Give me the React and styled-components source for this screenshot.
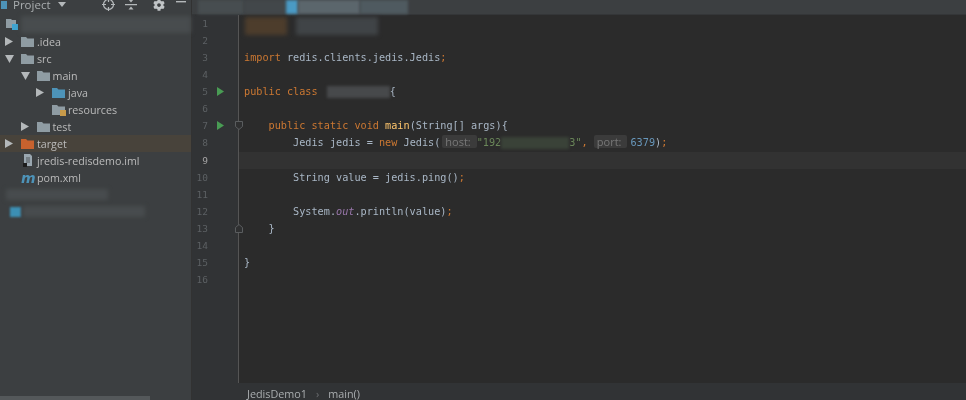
import React from 'react'
import styled, { createGlobalStyle } from 'styled-components'
import { FaCog } from 'react-icons/fa'

const GlobalStyle = createGlobalStyle`
  html, body {
    margin: 0;
    padding: 0;
    background: #2b2b2b;
  }
`

const TREE = [
  { depth: 0, arrow: 'right', icon: 'folder', name: '.idea' },
  { depth: 0, arrow: 'down', icon: 'folder', name: 'src' },
  { depth: 1, arrow: 'down', icon: 'folder', name: 'main' },
  { depth: 2, arrow: 'right', icon: 'source', name: 'java' },
  { depth: 2, icon: 'resources', name: 'resources' },
  { depth: 1, arrow: 'right', icon: 'folder', name: 'test' },
  { depth: 0, arrow: 'right', icon: 'target', name: 'target', selected: true },
  { depth: 0, icon: 'iml', name: 'jredis-redisdemo.iml' },
  { depth: 0, icon: 'maven', name: 'pom.xml' },
]

const RUN_LINES = [5, 7]
const LINE_COUNT = 16

const FolderIcon = ({ color = '#8f9ca3' }) => (
  <svg width="13" height="11" viewBox="0 0 13 11">
    <path d="M0 1h5l1.5 1.5H13V11H0z" fill={color} />
  </svg>
)

const FileIcon = () => (
  <svg width="13" height="13" viewBox="0 0 13 13">
    <path d="M3 0h6l2 2v10H3z" fill="#9aa7b0" />
    <path d="M5 4h4M5 6h4M5 8h4" stroke="#50565a" strokeWidth="1" />
    <rect x="2" y="9" width="4" height="4" fill="#1d1d1d" />
  </svg>
)

const TreeIcon = ({ type }) => {
  if (type === 'source') return <FolderIcon color="#4d93b8" />
  if (type === 'target') return <FolderIcon color="#c8622e" />
  if (type === 'iml') return <FileIcon />
  if (type === 'maven') return <MavenMark>m</MavenMark>
  if (type === 'resources') {
    return (
      <IconStack>
        <FolderIcon />
        <svg width="6" height="6" viewBox="0 0 6 6">
          <path d="M0 0h6v6H0z" fill="#c79a4a" />
        </svg>
      </IconStack>
    )
  }
  return <FolderIcon />
}

const Arrow = ({ dir }) => (
  <ArrowBox>
    {dir === 'right' && (
      <svg width="8" height="9" viewBox="0 0 8 9"><path d="M0 0l8 4.5L0 9z" fill="#b4b8ba" /></svg>
    )}
    {dir === 'down' && (
      <svg width="9" height="8" viewBox="0 0 9 8"><path d="M0 0h9L4.5 8z" fill="#b4b8ba" /></svg>
    )}
  </ArrowBox>
)

const RunIcon = () => (
  <svg width="7" height="9" viewBox="0 0 7 9"><path d="M0 0l7 4.500L0 9z" fill="#499c54" /></svg>
)

const FoldIcon = ({ line, up }) => (
  <FoldMark $line={line} $up={up}>
    <svg width="8" height="9" viewBox="0 0 8 9">
      <path d="M.5.5h7v5L4 8.500.5 5.500z" fill="#2f3031" stroke="#5a5d5f" />
    </svg>
  </FoldMark>
)

const App = () => {
  return (
    <Page>
      <GlobalStyle />

      <Sidebar>
        <PanelHeader>
          <HeaderTitle>
            <svg width="9" height="8" viewBox="0 0 9 8"><path d="M0 0h6v8H0z" fill="#4d93b8" /></svg>
            Project
            <svg width="8" height="5" viewBox="0 0 8 5"><path d="M0 0h8L4 5z" fill="#b4b8ba" /></svg>
          </HeaderTitle>
          <HeaderIcons>
            <svg width="13" height="13" viewBox="0 0 13 13" fill="none" stroke="#b4b8ba" strokeWidth="1.2">
              <circle cx="6.500" cy="6.500" r="5" />
              <path d="M6.500 0v4M6.500 9v4M0 6.500h4M9 6.500h4" />
            </svg>
            <svg width="12" height="13" viewBox="0 0 12 13" fill="#b4b8ba">
              <path d="M0 6h12v1.200H0zM6 4.500L3.500 1.500h5zM6 8.500l2.500 3h-5z" />
            </svg>
            <GearSlot><FaCog size={12} color="#c0c4c6" /></GearSlot>
            <svg width="10" height="13" viewBox="0 0 10 13"><path d="M0 3h10v1.400H0z" fill="#b4b8ba" /></svg>
          </HeaderIcons>
        </PanelHeader>

        <Tree>
          <RootRow>
            <svg width="13" height="13" viewBox="0 0 13 13">
              <path d="M0 1h5l1 1h4v8H0z" fill="#8f9ca3" />
              <rect x="6" y="6" width="6" height="6" fill="#3fa3cf" />
            </svg>
            <Smudge $width={170} $height={17} />
          </RootRow>
          {TREE.map(row => (
            <TreeRow key={row.name} $depth={row.depth} $selected={row.selected}>
              <Arrow dir={row.arrow} />
              <IconSlot><TreeIcon type={row.icon} /></IconSlot>
              <TreeLabel>{row.name}</TreeLabel>
            </TreeRow>
          ))}
          <RootRow>
            <Smudge $width={102} $height={11} />
          </RootRow>
          <RootRow>
            <BlueBlock />
            <Smudge $width={122} $height={11} />
          </RootRow>
        </Tree>

        <TreeScrollbar />
      </Sidebar>

      <Main>
        <TabBar>
          <TabSmudge $color="#474d50" $width={46} />
          <TabSmudge $color="#42474a" $width={42} />
          <TabSmudge $color="#4a9ac4" $width={12} />
          <TabSmudge $color="#5b666c" $width={62} />
          <TabSmudge $color="#4f5a60" $width={48} />
        </TabBar>

        <Editor>
          <Gutter>
            {Array.from({ length: LINE_COUNT }, (_, i) => i + 1).map(n => (
              <GutterRow key={n}>
                <LineNumber $current={n === 9}>{n}</LineNumber>
                <RunSlot>{RUN_LINES.includes(n) && <RunIcon />}</RunSlot>
              </GutterRow>
            ))}
          </Gutter>

          <Code>
            <HeaderMosaic>
              <MosaicBlock $color="#4d3d2c" $width={42} />
              <MosaicBlock $color="transparent" $width={9} />
              <MosaicBlock $color="#404447" $width={82} />
            </HeaderMosaic>
            <FoldIcon line={7} />
            <FoldIcon line={13} up />

            <Line />
            <Line />
            <Line><Kw>import</Kw> redis.clients.jedis.Jedis<Kw>;</Kw></Line>
            <Line />
            <Line><Kw>public class</Kw> <NameSmudge $width={63} $offset={3} />{'{'}</Line>
            <Line />
            <Line>    <Kw>public static void</Kw> <Method>main</Method>(String[] args){'{'}</Line>
            <Line>
              {'        '}Jedis jedis = <Kw>new</Kw> Jedis(<Hint $before={2}>host:</Hint><Str>"192</Str><NameSmudge $width={68} $color="#3a4238" /><Str>3"</Str><Kw>,</Kw> <Hint>port:</Hint><Num>6379</Num>)<Kw>;</Kw>
            </Line>
            <Line $current />
            <Line>{'        '}String value = jedis.ping()<Kw>;</Kw></Line>
            <Line />
            <Line>{'        '}System.<Field>out</Field>.println(value)<Kw>;</Kw></Line>
            <Line>    {'}'}</Line>
            <Line />
            <Line>{'}'}</Line>
            <Line />
          </Code>
        </Editor>

        <Breadcrumbs>
          JedisDemo1
          <Separator>›</Separator>
          main()
        </Breadcrumbs>
      </Main>
    </Page>
  )
}

export default App

const Page = styled.div`
  width: 966px;
  height: 400px;
  display: flex;
  overflow: hidden;
  background: #2b2b2b;
  filter: blur(0.45px);
`

const Sidebar = styled.aside`
  position: relative;
  width: 191px;
  flex-shrink: 0;
  background: #3c3f41;
  border-right: 1px solid #323232;
  font-family: "Open Sans", sans-serif;
  color: #bbbbbb;
`

const PanelHeader = styled.div`
  height: 15px;
  display: flex;
  justify-content: space-between;
  padding: 0 5px 0 1px;
`

const HeaderTitle = styled.div`
  height: 9px;
  display: flex;
  align-items: center;
  gap: 3px;
  font-size: 11.5px;
  color: #a9adaf;

  svg:last-child {
    margin-left: 4px;
  }
`

const HeaderIcons = styled.div`
  height: 9px;
  display: flex;
  align-items: center;
  gap: 10px;
`

const GearSlot = styled.span`
  display: flex;
  margin: 0 1px 0 6px;
`

const Tree = styled.div`
  display: grid;
  grid-auto-rows: 17px;
  padding-top: 1px;
`

const RootRow = styled.div`
  display: flex;
  align-items: center;
  padding-left: 6px;
  gap: 2px;
`

const Smudge = styled.div`
  width: ${p => p.$width}px;
  height: ${p => p.$height}px;
  background: #484c4e;
  filter: blur(2px);
`

const BlueBlock = styled.div`
  width: 11px;
  height: 10px;
  margin-left: 4px;
  background: #3c8fb4;
  filter: blur(1px);
`

const TreeRow = styled.div`
  display: flex;
  align-items: center;
  padding-left: ${p => 5 + p.$depth * 15.5}px;
  background: ${p => (p.$selected ? '#48433b' : 'transparent')};
`

const ArrowBox = styled.span`
  width: 16px;
  display: flex;
  flex-shrink: 0;
`

const IconSlot = styled.span`
  width: 16px;
  display: flex;
  flex-shrink: 0;
  align-items: center;
`

const IconStack = styled.span`
  position: relative;
  display: flex;

  svg:last-child {
    position: absolute;
    right: -1px;
    bottom: -1px;
  }
`

const MavenMark = styled.span`
  font-family: "DejaVu Sans", sans-serif;
  font-style: italic;
  font-weight: 700;
  font-size: 14px;
  line-height: 12px;
  color: #4d93b8;
`

const TreeLabel = styled.span`
  font-size: 10.7px;
  white-space: nowrap;
`

const TreeScrollbar = styled.div`
  position: absolute;
  left: 0;
  bottom: 0;
  width: 150px;
  height: 4px;
  background: #54585a;
`

const Main = styled.main`
  flex: 1;
  min-width: 0;
  display: flex;
  flex-direction: column;
`

const TabBar = styled.div`
  height: 15px;
  flex-shrink: 0;
  display: flex;
  padding-left: 6px;
  background: #3c3f41;
  border-bottom: 1px solid #343638;
  box-sizing: border-box;
`

const TabSmudge = styled.div`
  width: ${p => p.$width}px;
  background: ${p => p.$color};
  filter: blur(1.5px);
`

const Editor = styled.div`
  flex: 1;
  min-height: 0;
  display: flex;
  font-family: "DejaVu Sans Mono", monospace;
`

const Gutter = styled.div`
  width: 46px;
  flex-shrink: 0;
  background: #313335;
  border-right: 1px solid #555555;
`

const GutterRow = styled.div`
  height: 17.07px;
  display: flex;
  align-items: center;
`

const LineNumber = styled.span`
  width: 16px;
  text-align: right;
  font-size: 9.5px;
  color: ${p => (p.$current ? '#a4a3a3' : '#5c6063')};
`

const RunSlot = styled.span`
  margin-left: 9px;
  display: flex;
`

const Code = styled.div`
  position: relative;
  flex: 1;
  font-size: 10.2px;
  color: #a9b7c6;
  white-space: pre;
`

const Line = styled.div`
  height: 17.07px;
  line-height: 18px;
  padding-left: 5px;
  background: ${p => (p.$current ? '#323232' : 'transparent')};
`

const HeaderMosaic = styled.div`
  position: absolute;
  top: 2px;
  left: 6px;
  height: 18px;
  display: flex;
`

const MosaicBlock = styled.div`
  width: ${p => p.$width}px;
  background: ${p => p.$color};
  filter: blur(2px);
`

const FoldMark = styled.span`
  position: absolute;
  left: -4px;
  top: ${p => (p.$line - 1) * 17.07 + 4}px;
  display: flex;
  transform: ${p => (p.$up ? 'scaleY(-1)' : 'none')};
`

const Kw = styled.span`
  color: #cc7832;
`

const Method = styled.span`
  color: #ffc66d;
`

const Field = styled.span`
  color: #9876aa;
  font-style: italic;
`

const Str = styled.span`
  color: #6a8759;
`

const Num = styled.span`
  color: #6897bb;
`

const Hint = styled.span`
  display: inline-block;
  height: 13px;
  line-height: 13px;
  padding: 0 6px 0 3px;
  margin: 0 3px 0 ${p => p.$before || 0}px;
  border-radius: 2px;
  background: #3b3b3b;
  color: #787878;
  font-family: "Open Sans", sans-serif;
  font-size: 11px;

  & + ${Str} {
    margin-left: -3px;
  }
`

const NameSmudge = styled.span`
  display: inline-block;
  vertical-align: middle;
  width: ${p => p.$width}px;
  height: 12px;
  margin-left: ${p => p.$offset || 0}px;
  background: ${p => p.$color || '#47494b'};
  filter: blur(1.5px);
`

const Breadcrumbs = styled.div`
  height: 17px;
  flex-shrink: 0;
  box-sizing: border-box;
  display: flex;
  align-items: center;
  padding: 3px 0 0 55px;
  background: #313335;
  font-family: "Open Sans", sans-serif;
  font-size: 10.8px;
  color: #a9adaf;
  overflow: hidden;
`

const Separator = styled.span`
  margin: 0 9px;
  color: #6a6d70;
`
